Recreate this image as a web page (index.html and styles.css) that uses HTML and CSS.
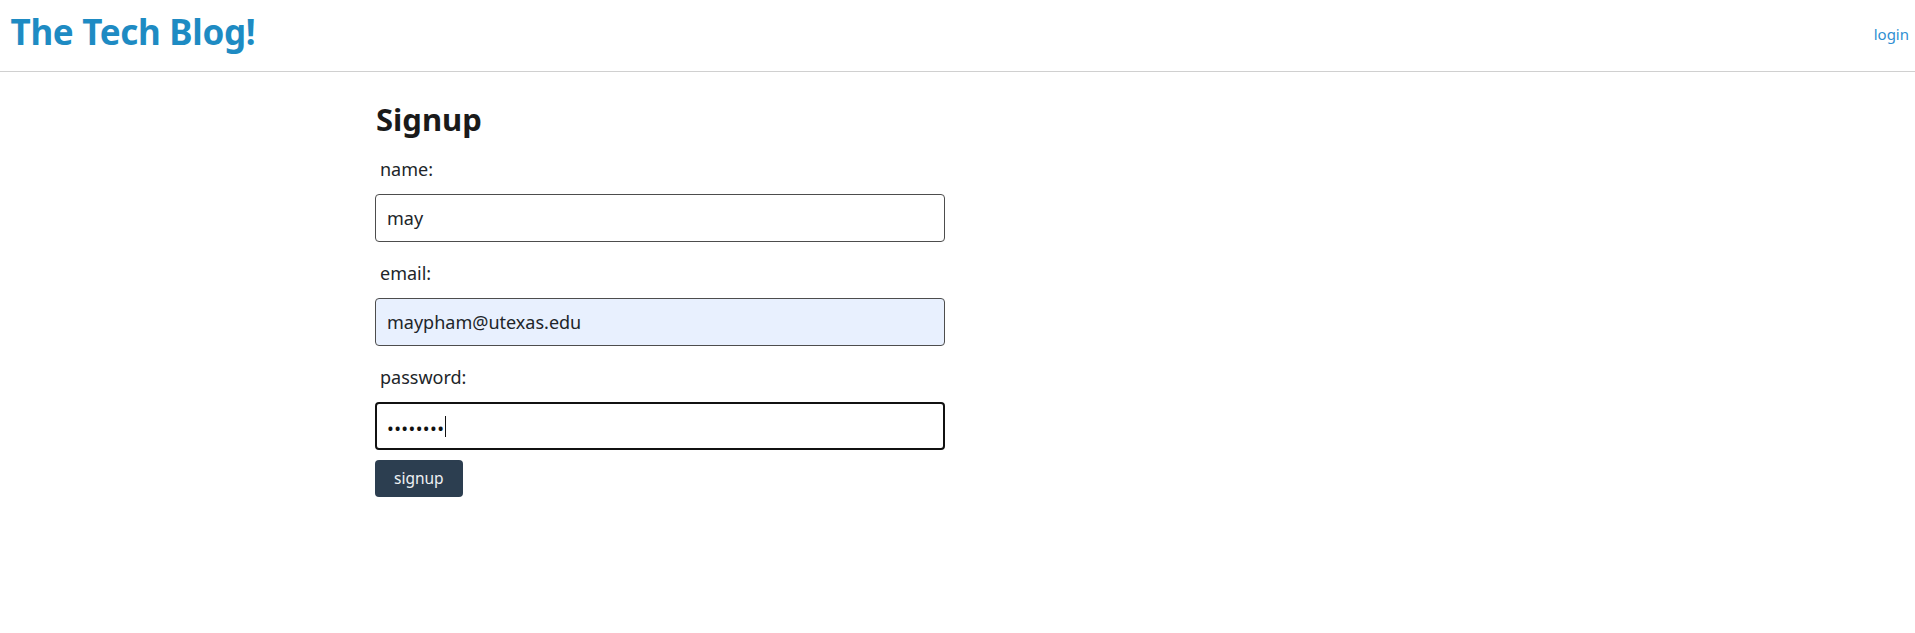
FILE: index.html
```html
<!DOCTYPE html>
<html lang="en">
<head>
<meta charset="utf-8">
<title>The Tech Blog!</title>
<link rel="stylesheet" href="styles.css">
</head>
<body>
<header class="site-header">
  <h1 class="brand">The Tech Blog!</h1>
  <nav class="nav"><a class="nav-link" href="#">login</a></nav>
</header>
<main class="page">
  <section class="signup">
    <h2 class="signup-title">Signup</h2>
    <form class="signup-form">
      <label class="field-label" for="name">name:</label>
      <input class="field-input" id="name" type="text" value="may">
      <label class="field-label" for="email">email:</label>
      <input class="field-input field-input--filled" id="email" type="email" value="maypham@utexas.edu">
      <label class="field-label" for="password">password:</label>
      <div class="field-input field-input--focus"><span class="dots">••••••••</span><span class="caret"></span></div>
      <button class="btn" type="button">signup</button>
    </form>
  </section>
</main>
</body>
</html>
```
FILE: styles.css
```css
* { box-sizing: border-box; }
html, body { margin: 0; padding: 0; }
body {
  font-family: "Noto Sans", "Open Sans", sans-serif;
  font-size: 18px;
  line-height: 1.5;
  color: #212529;
  background: #fff;
}
.site-header {
  display: flex;
  justify-content: space-between;
  align-items: flex-start;
  height: 72px;
  padding: 11px 6px 0 10.5px;
  border-bottom: 1px solid #d0d0d0;
}
.brand {
  margin: 0;
  font-size: 35px;
  font-weight: 700;
  color: #1e8bc3;
  line-height: 1.2;
  letter-spacing: -0.3px;
}
.nav { margin-top: 9px; }
.nav-link {
  color: #2f8fd2;
  text-decoration: none;
  font-size: 15px;
  line-height: 1.5;
}
.page {
  padding-left: 375px;
}
.signup { width: 570px; }
.signup-title {
  margin: 29px 0 18px 1px;
  font-size: 31px;
  font-weight: 700;
  line-height: 1.2;
  color: #1a1a1a;
}
.signup-form {
  display: flex;
  flex-direction: column;
  align-items: flex-start;
}
.field-label {
  display: block;
  margin: 0 0 11px 5px;
  font-size: 18px;
  line-height: 27px;
  color: #212529;
}
.field-input {
  display: block;
  width: 570px;
  height: 48px;
  margin: 0 0 18px 0;
  padding: 0 11px;
  font: inherit;
  font-size: 18px;
  color: #212529;
  background: #fff;
  border: 1px solid #4d4d4d;
  border-radius: 4px;
  outline: none;
}
.field-input--filled { background: #e8f0fe; }
.field-input--focus {
  display: flex;
  align-items: center;
  border: 2px solid #111;
  margin-bottom: 10px;
  padding: 0 10px;
}
.dots {
  font-size: 18px;
  letter-spacing: 0.4px;
  color: #111;
  line-height: 1;
  padding-top: 4px;
}
.caret {
  display: inline-block;
  width: 1px;
  height: 21px;
  background: #111;
  margin-left: 1px;
}
.btn {
  height: 37px;
  padding: 0 19px;
  font: inherit;
  font-size: 15.5px;
  line-height: 1;
  color: #eef1f4;
  background: #2c3e50;
  border: none;
  border-radius: 4px;
}
```
